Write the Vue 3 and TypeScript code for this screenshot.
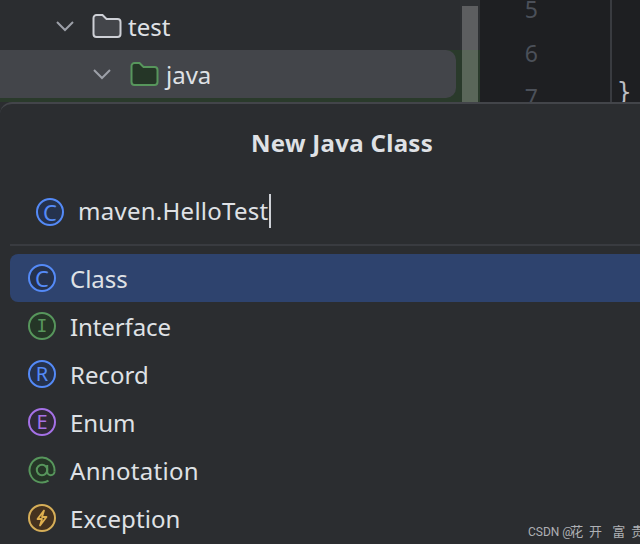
<script setup lang="ts">
// New Java Class popup over the project tree
const kinds = [
  { name: 'Class', letter: 'C', tone: 'blue' },
  { name: 'Interface', letter: 'I', tone: 'green' },
  { name: 'Record', letter: 'R', tone: 'blue' },
  { name: 'Enum', letter: 'E', tone: 'purple' },
  { name: 'Annotation', letter: '', tone: 'green' },
  { name: 'Exception', letter: '', tone: 'amber' },
]
const markName = '花 开  富 贵'
</script>

<template>
  <div class="screen">
    <div class="top">
      <div class="tree">
        <div class="row row-test">
          <svg class="chevron" width="20" height="12" viewBox="0 0 20 12"><path d="M2 2l8 8 8-8" /></svg>
          <svg class="folder" width="30" height="26" viewBox="0 0 30 26">
            <path d="M1.5 5a3 3 0 0 1 3-3h6l4 4h11a3 3 0 0 1 3 3v12a3 3 0 0 1-3 3h-21a3 3 0 0 1-3-3z" fill="#43454a" stroke="#ced0d6" stroke-width="2" />
          </svg>
          <span>test</span>
        </div>
        <div class="band">
          <div class="row row-java">
            <svg class="chevron" width="20" height="12" viewBox="0 0 20 12"><path d="M2 2l8 8 8-8" /></svg>
            <svg class="folder" width="29" height="25" viewBox="0 0 29 25">
              <path d="M1.5 4a3 3 0 0 1 3-3h5l4 4h11a3 3 0 0 1 3 3v12a3 3 0 0 1-3 3h-20a3 3 0 0 1-3-3z" fill="#253627" stroke="#57965c" stroke-width="2" />
            </svg>
            <span>java</span>
          </div>
        </div>
      </div>
      <div class="scroll"><div class="thumb"></div></div>
      <div class="gutter">
        <span>5</span>
        <span>6</span>
        <span>7</span>
      </div>
      <div class="code"><span>}</span></div>
    </div>

    <div class="dialog">
      <div class="title">New Java Class</div>
      <div class="field">
        <span class="badge blue letter-c">C</span>
        <span class="value">maven.HelloTest</span>
        <span class="caret"></span>
      </div>
      <div class="rule"></div>
      <ul class="list">
        <li v-for="(k, i) in kinds" :key="k.name" class="item" :class="{ active: i === 0 }">
          <span class="badge" :class="[k.tone, 'letter-' + k.letter.toLowerCase()]">
            <template v-if="k.letter">{{ k.letter }}</template>
            <svg v-else-if="k.name === 'Annotation'" class="ring-icon" width="28" height="28" viewBox="0 0 28 28">
              <path d="M26.5 15.5V14a12.5 12.5 0 1 0-6 10.7" fill="#253627" stroke="#57965c" stroke-width="2" />
              <circle cx="14" cy="14" r="5.2" fill="none" stroke="#57965c" stroke-width="2" />
              <path d="M19.2 9v6.5a3.6 3.6 0 0 0 7.3 0" fill="none" stroke="#57965c" stroke-width="2" />
            </svg>
            <svg v-else width="16" height="18" viewBox="0 0 16 18"><path d="M10 1.5L3.5 10H8l-2 6.5L12.5 8H8z" fill="none" stroke="#e0b04f" stroke-width="1.8" stroke-linejoin="round" /></svg>
          </span>
          <span class="label">{{ k.name }}</span>
        </li>
      </ul>
    </div>

    <div class="mark">CSDN @<span class="mark-cjk">{{ markName }}</span></div>
  </div>
</template>

<style>
html,
body {
  margin: 0;
  background: #2b2d30;
}
</style>

<style scoped>
.screen {
  position: relative;
  width: 640px;
  height: 544px;
  overflow: hidden;
  background: #2b2d30;
  color: #dfe1e5;
  font-family: "Noto Sans", "Open Sans", sans-serif;
  font-size: 24px;
}

.top {
  display: flex;
  height: 102px;
  background: #1e1f22;
}

.tree {
  display: flex;
  flex-direction: column;
  width: 460px;
  background: #2b2d30;
}

.row {
  display: flex;
  align-items: center;
  height: 48px;
  flex: none;
}

.row-test {
  height: 50px;
  padding: 2px 0 0 55px;
  box-sizing: border-box;
}

.row-test .folder {
  margin-left: 17px;
  margin-right: 6px;
}

.band {
  height: 52px;
  background: #2a3a2b;
}

.row-java {
  width: 456px;
  padding-left: 92px;
  box-sizing: border-box;
  background: #43454a;
  border-radius: 0 10px 10px 0;
}

.row-java .folder {
  margin-left: 18px;
  margin-right: 7px;
}

.chevron path {
  fill: none;
  stroke: #9da0a8;
  stroke-width: 2;
}

.scroll {
  width: 20px;
  background: linear-gradient(#2e3033 50px, #2a3a2b 50px);
  padding: 6px 2px 0;
  box-sizing: border-box;
}

.thumb {
  height: 96px;
  background: linear-gradient(#5d5e60 44px, #5a6659 44px);
}

.gutter {
  display: flex;
  flex-direction: column;
  align-items: flex-end;
  width: 132px;
  padding-right: 72px;
  box-sizing: border-box;
  border-right: 2px solid #393b40;
  color: #4b5059;
  font-size: 23px;
  line-height: 44px;
  margin-top: -13px;
  height: 115px;
  overflow: hidden;
}

.code {
  flex: 1;
  padding: 74px 0 0 5px;
  font-family: "DejaVu Sans Mono", monospace;
  font-size: 24px;
  line-height: 36px;
  color: #bcbec4;
  overflow: hidden;
}

.dialog {
  height: 442px;
  background: #2b2d30;
  border-top: 2px solid #43454a;
  border-top-left-radius: 12px;
  box-sizing: border-box;
}

.title {
  margin-top: 21px;
  padding-left: 251px;
  font-size: 24px;
  font-weight: 700;
  letter-spacing: 0.3px;
  line-height: 36px;
}

.field {
  display: flex;
  align-items: center;
  height: 40px;
  margin-top: 31px;
  padding-left: 36px;
}

.value {
  margin: 0 0 2px 14px;
  letter-spacing: 0.27px;
  line-height: 38px;
}

.caret {
  width: 2px;
  height: 34px;
  margin-bottom: 2px;
  background: #ced0d6;
}

.rule {
  height: 2px;
  margin: 12px 0 0 10px;
  background: #393b40;
}

.list {
  list-style: none;
  margin: 8px 0 0 10px;
  padding: 0;
}

.item {
  display: flex;
  align-items: center;
  gap: 14px;
  height: 48px;
  padding-left: 18px;
  border-radius: 8px 0 0 8px;
}

.item.active {
  background: #2e436e;
}

.item:nth-child(2) .label {
  letter-spacing: -0.1px;
}

.item:nth-child(5) .label {
  letter-spacing: 0.3px;
}

.item:nth-child(6) .label {
  letter-spacing: 0.1px;
}

.badge {
  position: relative;
  display: flex;
  align-items: center;
  justify-content: center;
  width: 28px;
  height: 28px;
  border: 2px solid;
  border-radius: 50%;
  box-sizing: border-box;
  font-family: "Noto Sans", sans-serif;
  font-size: 20px;
  line-height: 1;
  flex: none;
}

.letter-c {
  font-size: 22px;
}

.letter-i {
  font-family: "DejaVu Sans Mono", monospace;
  font-size: 18px;
}

.ring-icon {
  position: absolute;
  top: -2px;
  left: -2px;
}

.badge.green:has(.ring-icon) {
  border-color: transparent;
  background: transparent;
}

.blue {
  border-color: #548af7;
  color: #548af7;
  background: #25324d;
}

.green {
  border-color: #57965c;
  color: #57965c;
  background: #253627;
}

.purple {
  border-color: #a571e6;
  color: #a571e6;
  background: #2f2936;
}

.amber {
  border-color: #d6ae58;
  color: #d6ae58;
  background: #45321f;
}

.mark {
  position: absolute;
  left: 528px;
  bottom: 4px;
  width: 112px;
  white-space: pre;
  overflow: hidden;
  font-family: Roboto, sans-serif;
  font-size: 12px;
  line-height: 16px;
  color: #aeb0b4;
}

.mark-cjk {
  margin-left: -3px;
  font-family: "Noto Sans CJK SC", sans-serif;
  font-size: 13px;
  letter-spacing: 1.5px;
}
</style>
